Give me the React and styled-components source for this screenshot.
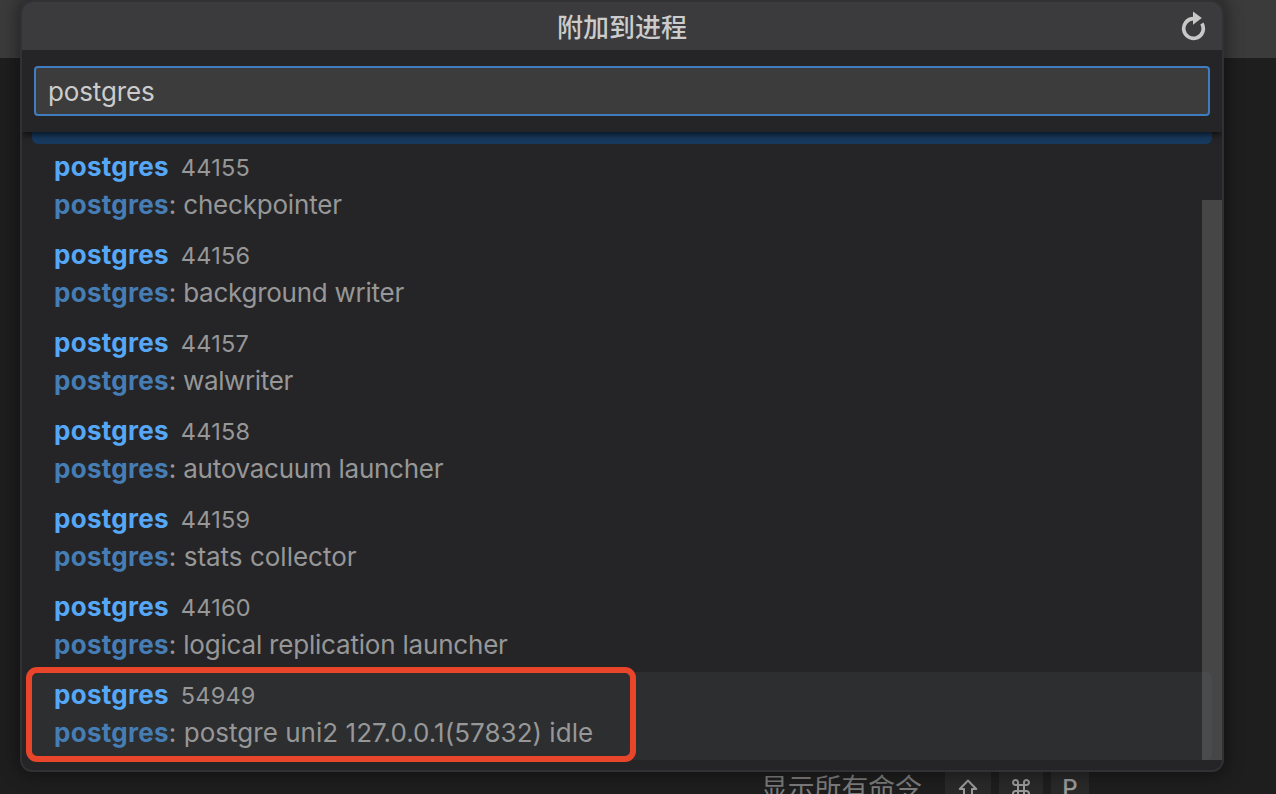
import styled, { createGlobalStyle } from "styled-components";

const PROCESSES = [
  { pid: "44155", detail: "checkpointer" },
  { pid: "44156", detail: "background writer", tracking: -0.25 },
  { pid: "44157", detail: "walwriter", tracking: -0.35 },
  { pid: "44158", detail: "autovacuum launcher", tracking: -0.25 },
  { pid: "44159", detail: "stats collector", tracking: 0 },
  { pid: "44160", detail: "logical replication launcher" },
  {
    pid: "54949",
    detail: "postgre uni2 127.0.0.1(57832) idle",
    tracking: 0.03,
    hovered: true,
  },
];

const RefreshIcon = () => (
  <svg width="28" height="32" viewBox="0 0 28 32" fill="none">
    <path
      d="M15.5 8.7A9.8 9.8 0 1 0 23.9 13.5"
      stroke="#c8c8c8"
      strokeWidth="3.7"
    />
    <path d="M15 1.6L23.8 7.9L15 14.8Z" fill="#c8c8c8" />
  </svg>
);

const ShiftIcon = () => (
  <svg width="20" height="22" viewBox="0 0 20 22" fill="none">
    <path
      d="M10 2.5L18.2 11H14V19.5H6V11H1.8Z"
      stroke="#9a9a9a"
      strokeWidth="2"
      strokeLinejoin="round"
    />
  </svg>
);

const CommandIcon = () => (
  <svg width="18" height="20" viewBox="0 -1 18 20" fill="none">
    <path
      d="M6 6V3.6A2.5 2.5 0 1 0 3.5 6H14.5A2.5 2.5 0 1 0 12 3.6V14.4A2.5 2.5 0 1 0 14.5 12H3.5A2.5 2.5 0 1 0 6 14.4Z"
      stroke="#9a9a9a"
      strokeWidth="2"
    />
  </svg>
);

const App = () => {
  return (
    <Window>
      <GlobalStyle />
      <TabStrip />
      <Editor>
        <Hint>
          <HintLabel>显示所有命令</HintLabel>
          <Keys>
            <Key $width={46}>
              <ShiftIcon />
            </Key>
            <Key $width={44}>
              <CommandIcon />
            </Key>
            <Key $width={38}>P</Key>
          </Keys>
        </Hint>
      </Editor>
      <QuickPick>
        <TitleBar>
          <Title>附加到进程</Title>
          <RefreshButton aria-label="refresh">
            <RefreshIcon />
          </RefreshButton>
        </TitleBar>
        <Filter>
          <FilterInput defaultValue="postgres" spellCheck={false} />
        </Filter>
        <List>
          <FocusedRow />
          {PROCESSES.map(({ pid, detail, tracking, hovered }) => (
            <Row key={pid} $hovered={hovered}>
              <Line>
                <Match>postgres</Match>
                <Pid>{pid}</Pid>
              </Line>
              <Line>
                <Match $dim>postgres</Match>
                <Detail $tracking={tracking}>: {detail}</Detail>
              </Line>
            </Row>
          ))}
          <Scrollbar />
        </List>
      </QuickPick>
      <Marker />
    </Window>
  );
};

export default App;

const GlobalStyle = createGlobalStyle`
  * {
    box-sizing: border-box;
  }

  body {
    margin: 0;
    overflow: hidden;
    font-family: Inter, "Noto Sans CJK SC", sans-serif;
  }
`;

const Window = styled.div`
  position: relative;
  display: flex;
  flex-direction: column;
  width: 1276px;
  height: 794px;
  overflow: hidden;
  background-color: #1e1e1e;
`;

const TabStrip = styled.div`
  flex: none;
  height: 58px;
  background-color: #3b3b3b;
`;

const Editor = styled.div`
  flex: 1;
  min-height: 0;
  display: flex;
  flex-direction: column;
  justify-content: flex-end;
`;

const Hint = styled.div`
  display: flex;
  height: 24px;
  padding-left: 761px;
`;

const HintLabel = styled.span`
  width: 184px;
  font-size: 26.8px;
  line-height: 36px;
  white-space: nowrap;
  color: #7c7c7c;
`;

const Keys = styled.div`
  display: flex;
  gap: 8px;
`;

const Key = styled.span`
  display: flex;
  justify-content: center;
  width: ${({ $width }) => $width}px;
  height: 40px;
  padding-top: 8px;
  font-size: 24px;
  font-weight: 500;
  line-height: 22px;
  color: #9a9a9a;
  background-color: #292929;
`;

const QuickPick = styled.div`
  position: absolute;
  top: 0;
  left: 20px;
  display: flex;
  flex-direction: column;
  width: 1204px;
  height: 772px;
  overflow: hidden;
  border: 2px solid #313133;
  border-radius: 12px;
  background-color: #252527;
  box-shadow: 0 0 16px 4px rgba(0, 0, 0, 0.36);
`;

const TitleBar = styled.div`
  flex: none;
  display: grid;
  grid-template-columns: 44px 1fr 44px;
  align-items: center;
  height: 48px;
  background-color: #3b3b3d;
`;

const Title = styled.h1`
  grid-column: 2;
  margin: 0;
  padding-top: 4px;
  font-size: 26px;
  font-weight: 500;
  line-height: 44px;
  text-align: center;
  color: #cccccc;
`;

const RefreshButton = styled.button`
  display: flex;
  width: 28px;
  height: 32px;
  padding: 0;
  border: 0;
  background: none;
`;

const Filter = styled.div`
  position: relative;
  z-index: 1;
  flex: none;
  height: 82px;
  padding: 16px 12px;
  background-color: #252527;
  box-shadow: 0 4px 6px -1px rgba(0, 0, 0, 0.6);
  clip-path: inset(0 0 -12px 0);
`;

const FilterInput = styled.input`
  display: block;
  width: 1176px;
  height: 50px;
  padding: 1px 12px 0;
  border: 2px solid #3f7cc0;
  border-radius: 4px;
  outline: none;
  font-family: inherit;
  font-size: 26px;
  letter-spacing: -0.15px;
  color: #cccccc;
  background-color: #3c3c3c;
`;

const List = styled.div`
  position: relative;
  flex: none;
  height: 628px;
  padding: 0 10px;
`;

const FocusedRow = styled.div`
  height: 12px;
  border-radius: 0 0 6px 6px;
  background-color: #173a5e;
`;

const Row = styled.div`
  height: 88px;
  padding: 4px 22px 0;
  border-radius: 6px;
  background-color: ${({ $hovered }) => ($hovered ? "#2c2e30" : "transparent")};
`;

const Line = styled.div`
  display: flex;
  align-items: baseline;
  height: 38px;
  line-height: 38px;
  white-space: pre;
`;

const Match = styled.span`
  font-size: 26px;
  font-weight: 700;
  letter-spacing: 0.28px;
  color: ${({ $dim }) => ($dim ? "#467db5" : "#56a7f6")};
`;

const Pid = styled.span`
  margin-left: 12px;
  font-size: 23.5px;
  letter-spacing: 0.2px;
  color: #979798;
`;

const Detail = styled.span`
  font-size: 26px;
  letter-spacing: ${({ $tracking = -0.2 }) => $tracking}px;
  color: #979798;
`;

const Scrollbar = styled.div`
  position: absolute;
  top: 68px;
  right: 0;
  width: 20px;
  height: 560px;
  background-color: rgba(121, 121, 121, 0.4);
`;

const Marker = styled.div`
  position: absolute;
  top: 667px;
  left: 26px;
  width: 610px;
  height: 95px;
  border: 6px solid #e8452a;
  border-radius: 11px;
`;
